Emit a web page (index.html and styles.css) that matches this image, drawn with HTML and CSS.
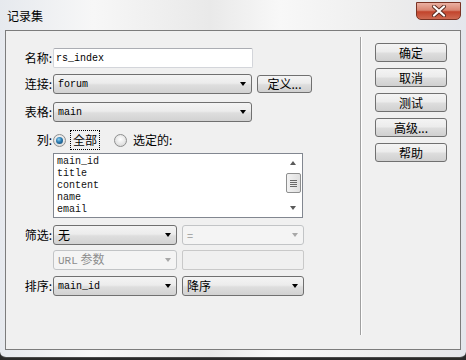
FILE: index.html
```html
<!DOCTYPE html>
<html>
<head>
<meta charset="utf-8">
<link rel="stylesheet" href="styles.css">
</head>
<body>
<div class="window">
  <div class="titlebar">
    <span class="title">记录集</span>
    <div class="close">
      <svg width="16" height="12" viewBox="0 0 16 12"><path d="M3 1.5 L13 10.5 M13 1.5 L3 10.5" stroke="#5a2a20" stroke-width="4" stroke-linecap="round"/><path d="M3 1.5 L13 10.5 M13 1.5 L3 10.5" stroke="#ffffff" stroke-width="2.2" stroke-linecap="round"/></svg>
    </div>
  </div>
  <div class="client">
    <div class="form">
      <div class="row r-name">
        <span class="lbl">名称:</span>
        <div class="textbox w200"><span class="mono">rs_index</span></div>
      </div>
      <div class="row r-conn">
        <span class="lbl">连接:</span>
        <div class="combo w199"><span class="mono b">forum</span><span class="arrow"></span></div>
        <div class="btn btn-def">定义...</div>
      </div>
      <div class="row r-table">
        <span class="lbl">表格:</span>
        <div class="combo w199"><span class="mono b">main</span><span class="arrow"></span></div>
      </div>
      <div class="row r-cols">
        <span class="lbl">列:</span>
        <span class="radio on"><span class="dot"></span></span>
        <span class="focus">全部</span>
        <span class="radio"></span>
        <span class="rtext">选定的:</span>
      </div>
      <div class="row r-list">
        <span class="lbl"></span>
        <div class="listbox">
          <div class="items mono">
            <div>main_id</div>
            <div>title</div>
            <div>content</div>
            <div>name</div>
            <div>email</div>
          </div>
          <div class="scroll">
            <div class="sarrow up"></div>
            <div class="thumb"><i></i><i></i><i></i><i></i></div>
            <div class="sfill"></div>
            <div class="sarrow down"></div>
          </div>
        </div>
      </div>
      <div class="row r-filter">
        <span class="lbl">筛选:</span>
        <div class="combo w124"><span class="cjk">无</span><span class="arrow"></span></div>
        <div class="combo w122 dis"><span class="eq">=</span><span class="arrow"></span></div>
      </div>
      <div class="row r-url">
        <span class="lbl"></span>
        <div class="combo w124 dis"><span class="urltxt"><span class="mono url">URL</span> 参数</span><span class="arrow"></span></div>
        <div class="textbox w122 dis"></div>
      </div>
      <div class="row r-sort">
        <span class="lbl">排序:</span>
        <div class="combo w124"><span class="mono b">main_id</span><span class="arrow"></span></div>
        <div class="combo w122"><span class="cjk">降序</span><span class="arrow"></span></div>
      </div>
    </div>
    <div class="sep"></div>
    <div class="buttons">
      <div class="btn">确定</div>
      <div class="btn">取消</div>
      <div class="btn">测试</div>
      <div class="btn">高级...</div>
      <div class="btn">帮助</div>
    </div>
  </div>
</div>
</body>
</html>
```
FILE: styles.css
```css
html, body {
  margin: 0;
  padding: 0;
  background: #2a2a2a;
}
body {
  width: 466px;
  height: 360px;
  overflow: hidden;
  font-family: "Noto Sans CJK SC", "Liberation Sans", sans-serif;
  font-size: 12px;
  color: #000;
}
.window {
  width: 466px;
  height: 358px;
  box-sizing: border-box;
  padding: 0 5px 0 5px;
  background: linear-gradient(90deg, #e6e9ee 0%, #f7f7f7 20%, #e9e9e9 45%, #f8f8f8 60%, #ececec 85%, #e4e6ec 100%);
  border-bottom: 1px solid #4a4a4a;
  border-radius: 0 0 6px 6px;
  display: flex;
  flex-direction: column;
}
.titlebar {
  height: 30px;
  display: flex;
  justify-content: space-between;
  align-items: flex-start;
}
.title {
  margin-top: 7px;
  margin-left: 2px;
  font-size: 12px;
  line-height: 17px;
  color: #000;
}
.close {
  margin-top: 2px;
  width: 45px;
  height: 18px;
  box-sizing: border-box;
  border: 1px solid #7a3324;
  border-radius: 0 0 5px 5px;
  background: linear-gradient(#eab0a2 0%, #d98672 45%, #c2442c 55%, #cf6a52 100%);
  display: flex;
  align-items: center;
  justify-content: center;
}
.client {
  height: 320px;
  box-sizing: border-box;
  border: 1px solid #7c7c7c;
  background: #f0f0f0;
  display: flex;
}
.form {
  width: 354px;
  padding-top: 17px;
  display: flex;
  flex-direction: column;
}
.row {
  display: flex;
  align-items: center;
}
.lbl {
  width: 46px;
  margin-right: 1px;
  text-align: right;
  font-size: 12px;
  line-height: 14px;
}
.r-conn { margin-top: 6px; }
.r-table { margin-top: 8px; }
.r-cols { margin-top: 8px; height: 20px; }
.r-list { margin-top: 3px; }
.r-filter { margin-top: 7px; }
.r-url { margin-top: 5px; }
.r-sort { margin-top: 6px; }
.r-filter .combo + .combo,
.r-url .combo + .textbox,
.r-sort .combo + .combo { margin-left: 5px; }

.mono {
  font-family: "Liberation Mono", "DejaVu Sans Mono", monospace;
  font-size: 10px;
}
.b { font-weight: normal; color: #000; }
.url { font-size: 11px; }

.textbox {
  height: 20px;
  box-sizing: border-box;
  border: 1px solid #d3d5da;
  border-top-color: #abadb3;
  border-radius: 2px;
  background: #fff;
  display: flex;
  align-items: center;
  padding-left: 2px;
}
.textbox.dis {
  background: #f0f0f0;
  border-color: #c9c9c9;
}
.w200 { width: 200px; }
.w199 { width: 199px; }
.w124 { width: 124px; }
.w122 { width: 122px; }

.combo {
  position: relative;
  height: 20px;
  box-sizing: border-box;
  border: 1px solid #707070;
  border-radius: 3px;
  background: linear-gradient(#f4f4f4 0%, #ececec 45%, #dedede 55%, #d2d2d2 100%);
  display: flex;
  align-items: center;
  padding-left: 4px;
}
.combo .arrow {
  margin-left: auto;
  margin-right: 5px;
  width: 0;
  height: 0;
  border-left: 3.5px solid transparent;
  border-right: 3.5px solid transparent;
  border-top: 4px solid #000;
}
.combo .cjk { font-size: 12px; line-height: 14px; }
.combo.dis {
  border-color: #c2c4c6;
  background: #f4f4f4;
  color: #8d8d8d;
}
.combo.dis .arrow { border-top-color: #a8a8a8; }
.eq { font-size: 11px; color: #9a9a9a; }
.urltxt { color: #8d8d8d; font-size: 12px; line-height: 14px; }

.btn {
  width: 72px;
  height: 19px;
  box-sizing: border-box;
  border: 1px solid #707070;
  border-radius: 3px;
  background: linear-gradient(#f4f4f4 0%, #ececec 45%, #dddddd 55%, #d0d0d0 100%);
  display: flex;
  align-items: center;
  justify-content: center;
  font-size: 12px;
  line-height: 14px;
}
.btn-def {
  width: 55px;
  height: 18px;
  margin-left: 5px;
}

.radio {
  width: 13px;
  height: 13px;
  box-sizing: border-box;
  border-radius: 50%;
  border: 1px solid #8e8f8f;
  background: radial-gradient(circle at 50% 40%, #ffffff 0%, #e6e6e6 55%, #cfcfcf 100%);
  display: flex;
  align-items: center;
  justify-content: center;
}
.radio.on .dot {
  width: 7px;
  height: 7px;
  border-radius: 50%;
  background: radial-gradient(circle at 40% 35%, #8fd0f0 0%, #2a7ab0 45%, #0e3f66 100%);
}
.focus {
  margin-left: 4px;
  height: 20px;
  width: 30px;
  box-sizing: border-box;
  border: 1px dotted #000;
  display: flex;
  align-items: center;
  justify-content: center;
  font-size: 12px;
  line-height: 14px;
}
.r-cols .radio + .rtext { margin-left: 6px; }
.r-cols .focus + .radio { margin-left: 14px; }
.rtext { font-size: 12px; line-height: 14px; }

.listbox {
  width: 250px;
  height: 65px;
  box-sizing: border-box;
  border: 1px solid #828790;
  background: #fff;
  display: flex;
}
.items {
  flex: 1;
  padding: 2px 0 0 3px;
  line-height: 12px;
  color: #111;
}
.scroll {
  width: 17px;
  display: flex;
  flex-direction: column;
  align-items: center;
}
.sarrow {
  height: 17px;
  width: 17px;
  position: relative;
}
.sarrow::after {
  content: "";
  position: absolute;
  left: 5px;
  top: 7px;
  border-left: 3.5px solid transparent;
  border-right: 3.5px solid transparent;
}
.sarrow.up::after { border-bottom: 4px solid #5a5a5a; }
.sarrow.down::after { border-top: 4px solid #5a5a5a; top: 6px; }
.thumb {
  width: 15px;
  height: 20px;
  margin-top: 2px;
  box-sizing: border-box;
  border: 1px solid #8e8f8f;
  border-radius: 2px;
  background: linear-gradient(90deg, #f2f2f2, #e0e0e0);
  display: flex;
  flex-direction: column;
  align-items: center;
  justify-content: center;
  gap: 1px;
}
.thumb i {
  display: block;
  width: 7px;
  height: 1px;
  background: #6a6a6a;
}
.sfill { flex: 1; }

.sep {
  width: 1px;
  height: 298px;
  margin-top: 6px;
  background: #a0a0a0;
  box-shadow: 1px 0 0 #ffffff;
}
.buttons {
  margin-left: 14px;
  padding-top: 12px;
  display: flex;
  flex-direction: column;
  gap: 6px;
}
```
